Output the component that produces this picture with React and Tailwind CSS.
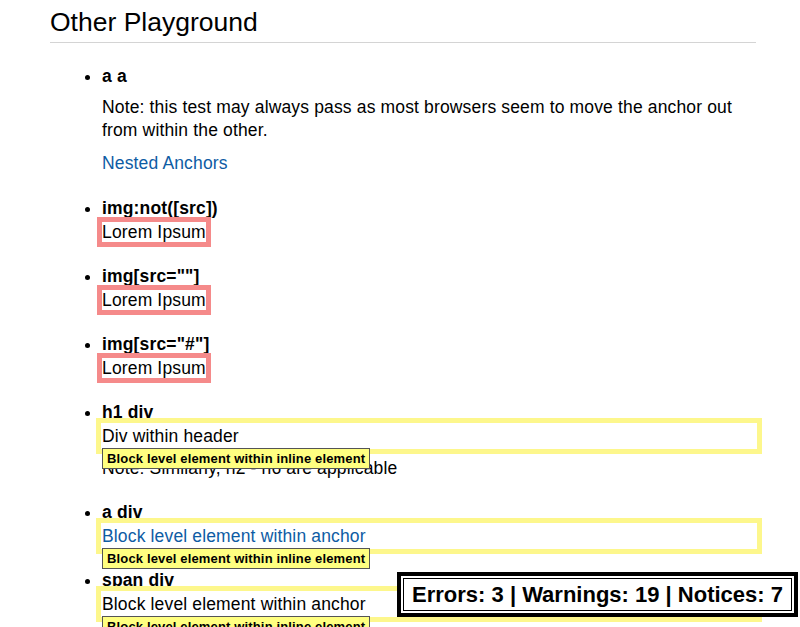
import React from "react";

const font = { fontFamily: '"Liberation Sans", Arial, sans-serif' };

// tooltip shown under block-in-inline elements
const Tip = () => (
	<span className="absolute left-0 top-full z-10 whitespace-nowrap border border-[#555] bg-[#ffff80] px-[4px] text-[13px] font-bold leading-[19px] tracking-[0.15px] text-black">
		Block level element within inline element
	</span>
);

const Lorem = () => (
	<span className="outline-solid outline-[5px] outline-offset-[0px] outline-[#f58a8a]">
		Lorem Ipsum
	</span>
);

const BlockBox = ({ children, link }) => (
	<div className="relative outline-solid outline-[5px] outline-offset-[1px] outline-[#fdf78c]">
		{link ? <a className="text-[#0e5ca4]">{children}</a> : children}
		<Tip />
	</div>
);

const Item = ({ title, children, className = "mb-[20px]" }) => (
	<li className={className}>
		<div className="font-bold">{title}</div>
		{children}
	</li>
);

export default function App() {
	return (
		<div
			className="min-h-screen bg-white pl-[50px] pr-[44px] text-[17.5px] leading-[24px] tracking-[0.15px] text-black"
			style={font}
		>
			<h2 className="mt-[5px] border-b border-[#d4d4d4] pb-[3px] text-[26.5px] leading-[34px] font-normal tracking-normal">
				Other Playground
			</h2>
			<ul className="mt-[21px] list-disc pl-[52px]">
				<Item title="a a" className="mb-[21px]">
					<p className="mt-[8px] leading-[23px]">
						Note: this test may always pass as most browsers seem to move the anchor out from within the other.
					</p>
					<p className="mt-[9px]">
						<a className="text-[#0e5ca4]">Nested Anchors</a>
					</p>
				</Item>
				<Item title="img:not([src])">
					<Lorem />
				</Item>
				<Item title='img[src=""]'>
					<Lorem />
				</Item>
				<Item title='img[src="#"]'>
					<Lorem />
				</Item>
				<Item title="h1 div">
					<BlockBox>Div within header</BlockBox>
					<p className="mt-[8px]">Note: Similarly, h2 - h6 are applicable</p>
				</Item>
				<Item title="a div">
					<BlockBox link>Block level element within anchor</BlockBox>
				</Item>
				<Item title="span div">
					<BlockBox>Block level element within anchor</BlockBox>
				</Item>
			</ul>

			<div className="fixed bottom-[10px] right-[2px] z-20 border-[4px] border-black bg-white p-[2px]">
				<div className="border border-black px-[8px] py-[3px] text-[22px] font-bold leading-[25px] tracking-normal whitespace-nowrap">
					Errors: 3 | Warnings: 19 | Notices: 7
				</div>
			</div>
		</div>
	);
}
